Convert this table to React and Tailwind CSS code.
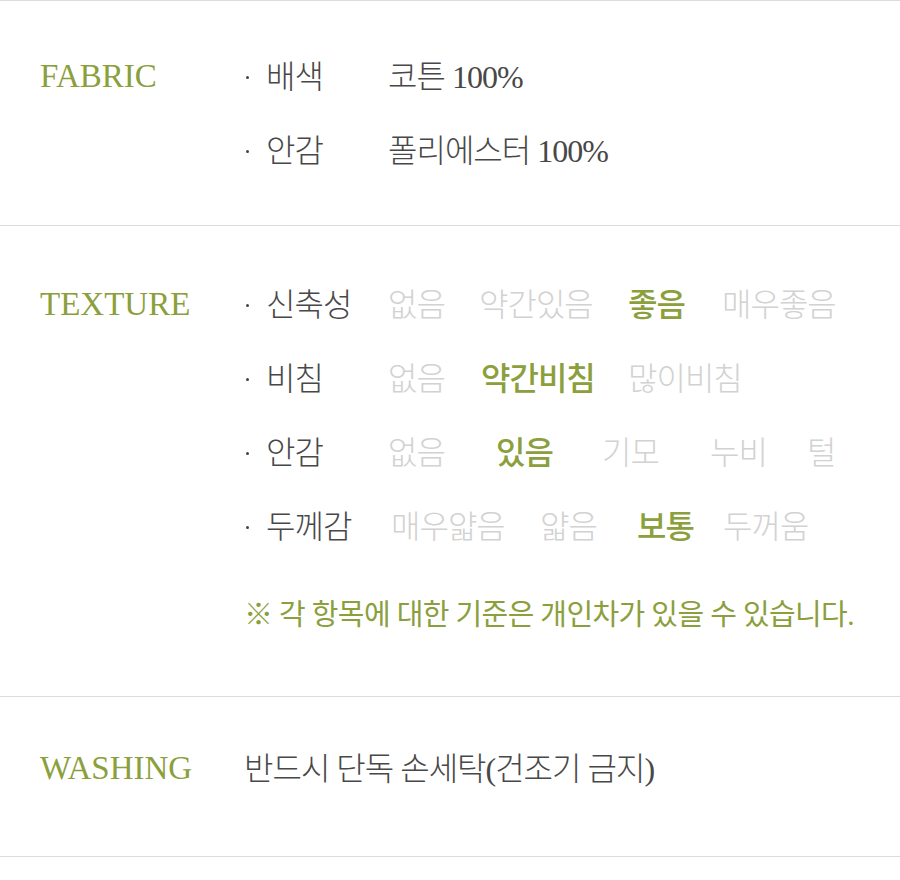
import React from "react";

const font = { fontFamily: '"Liberation Serif", "Noto Sans CJK KR", serif' };

// ─── Data ─────────────────────────────────────────────────────────────────────
const fabric = [
  { label: "배색", value: "코튼 100%" },
  { label: "안감", value: "폴리에스터 100%" },
];

const texture = [
  {
    label: "신축성",
    options: [
      { text: "없음", w: "w-[91px]" },
      { text: "약간있음", w: "w-[149px]" },
      { text: "좋음", w: "w-[94px]", on: true },
      { text: "매우좋음" },
    ],
  },
  {
    label: "비침",
    options: [
      { text: "없음", w: "w-[93px]" },
      { text: "약간비침", w: "w-[147px]", on: true },
      { text: "많이비침" },
    ],
  },
  {
    label: "안감",
    options: [
      { text: "없음", w: "w-[108px]" },
      { text: "있음", w: "w-[106px]", on: true },
      { text: "기모", w: "w-[108px]" },
      { text: "누비", w: "w-[97px]" },
      { text: "털" },
    ],
  },
  {
    label: "두께감",
    offset: "ml-[3px]",
    options: [
      { text: "매우얇음", w: "w-[149px]" },
      { text: "얇음", w: "w-[97px]" },
      { text: "보통", w: "w-[86px]", on: true },
      { text: "두꺼움" },
    ],
  },
];

function Heading({ children }) {
  return (
    <div className="w-[204px] flex-shrink-0 h-[74px] flex items-center text-[33px] text-[#8ba03c]">
      {children}
    </div>
  );
}

function Row({ label, children }) {
  return (
    <div className="h-[74px] flex items-center text-[32px] tracking-[-1px] font-light text-[#484848]">
      <span className="w-[22px] flex items-center">
        <span className="ml-[2px] w-[3px] h-[3px] rounded-full bg-[#444]" />
      </span>
      <span className="w-[122px]">{label}</span>
      {children}
    </div>
  );
}

export default function App() {
  return (
    <div className="w-[900px] min-h-[880px] bg-white" style={font}>
      {/* Fabric */}
      <section className="border-t border-b border-[#dcdcdc] flex pl-10 pt-[39px] pb-[37px]">
        <Heading>FABRIC</Heading>
        <div>
          {fabric.map((r) => (
            <Row key={r.label} label={r.label}>
              <span>{r.value}</span>
            </Row>
          ))}
        </div>
      </section>

      {/* Texture */}
      <section className="border-b border-[#dcdcdc] flex pl-10 pt-[42px] pb-[60px]">
        <Heading>TEXTURE</Heading>
        <div>
          {texture.map((r) => (
            <Row key={r.label} label={r.label}>
              <div className={`flex items-center ${r.offset || ""}`}>
                {r.options.map((o) => (
                  <span
                    key={o.text}
                    className={`${o.w || ""} ${o.on ? "text-[#8ba03c] font-medium" : "text-[#d2d2d2]"}`}
                  >
                    {o.text}
                  </span>
                ))}
              </div>
            </Row>
          ))}
          <div className="mt-[32px] h-[40px] flex items-center text-[29px] tracking-[-0.6px] text-[#8ba03c]">
            ※ 각 항목에 대한 기준은 개인차가 있을 수 있습니다.
          </div>
        </div>
      </section>

      {/* Washing */}
      <section className="border-b border-[#dcdcdc] flex pl-10 pt-[35px] pb-[50px]">
        <Heading>WASHING</Heading>
        <div className="h-[74px] flex items-center text-[32px] tracking-[-1px] font-light text-[#484848]">
          반드시 단독 손세탁(건조기 금지)
        </div>
      </section>
    </div>
  );
}
